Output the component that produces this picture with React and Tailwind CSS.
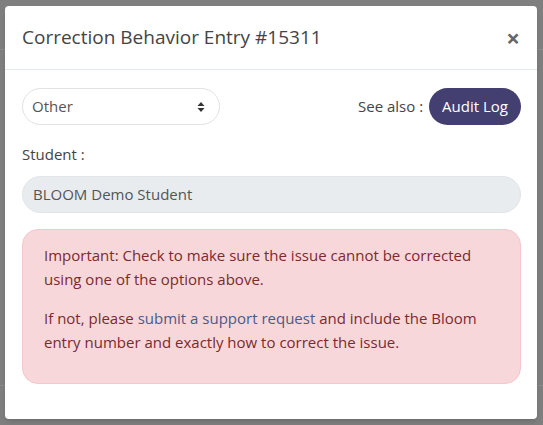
export default function App() {
  return (
    <div className="relative h-[425px] w-[543px] overflow-hidden bg-[#7f7f7f] pt-[6px] pl-[5px]" style={{ fontFamily: '"Open Sans", sans-serif' }}>
      {/* faint backdrop page lines */}
      <div className="absolute left-0 top-[49px] h-px w-full bg-[#8a8a8a]" />
      <div className="absolute left-0 top-[385px] h-px w-full bg-[#8a8a8a]" />

      <div className="relative flex h-[413px] w-[532px] flex-col rounded-[4px] bg-white shadow-md">
        {/* Header */}
        <div className="flex h-[64px] items-center justify-between border-b border-[#e3e8ee] pl-[17px] pr-[17px]">
          <h2 className="text-[19px] text-[#444]">Correction Behavior Entry #15311</h2>
          <button className="text-[24px] font-bold leading-none text-[#666]">×</button>
        </div>

        {/* Body */}
        <div className="pl-[17px] pr-[16px] pt-[18px]">
          <div className="flex items-center justify-between">
            <div className="flex h-[37px] w-[198px] items-center justify-between rounded-full border border-[#e2e2e2] pl-[9px] pr-[14px] text-[15px] text-[#555]">
              <span>Other</span>
              <svg width="8" height="12" viewBox="0 0 8 12">
                <path d="M4 1 L7.5 5 H0.5 Z" fill="#333" />
                <path d="M4 11 L7.5 7 H0.5 Z" fill="#333" />
              </svg>
            </div>
            <div className="flex items-center gap-[6px]">
              <span className="text-[15px] text-[#444]">See also :</span>
              <button className="h-[37px] rounded-full bg-[#443f71] px-[13px] text-[15px] text-white">Audit Log</button>
            </div>
          </div>

          <div className="mt-[18px] text-[15px] text-[#444]">Student :</div>

          <div className="mt-[10px] flex h-[37px] items-center rounded-full border border-[#e2e5e8] bg-[#e9ecef] pl-[10px] text-[15px] text-[#555]">
            BLOOM Demo Student
          </div>

          <div className="mt-[16px] rounded-[16px] border border-[#f5c6cb] bg-[#f8d7da] px-[21px] pt-[13px] pb-[29px] text-[15px] leading-[24px] text-[#7b2a2f]">
            <p>Important: Check to make sure the issue cannot be corrected using one of the options above.</p>
            <p className="mt-[15px]">
              If not, please <span className="text-[#4a5a8a]">submit a support request</span> and include the Bloom entry number and exactly how to correct the issue.
            </p>
          </div>
        </div>
      </div>
    </div>
  );
}
